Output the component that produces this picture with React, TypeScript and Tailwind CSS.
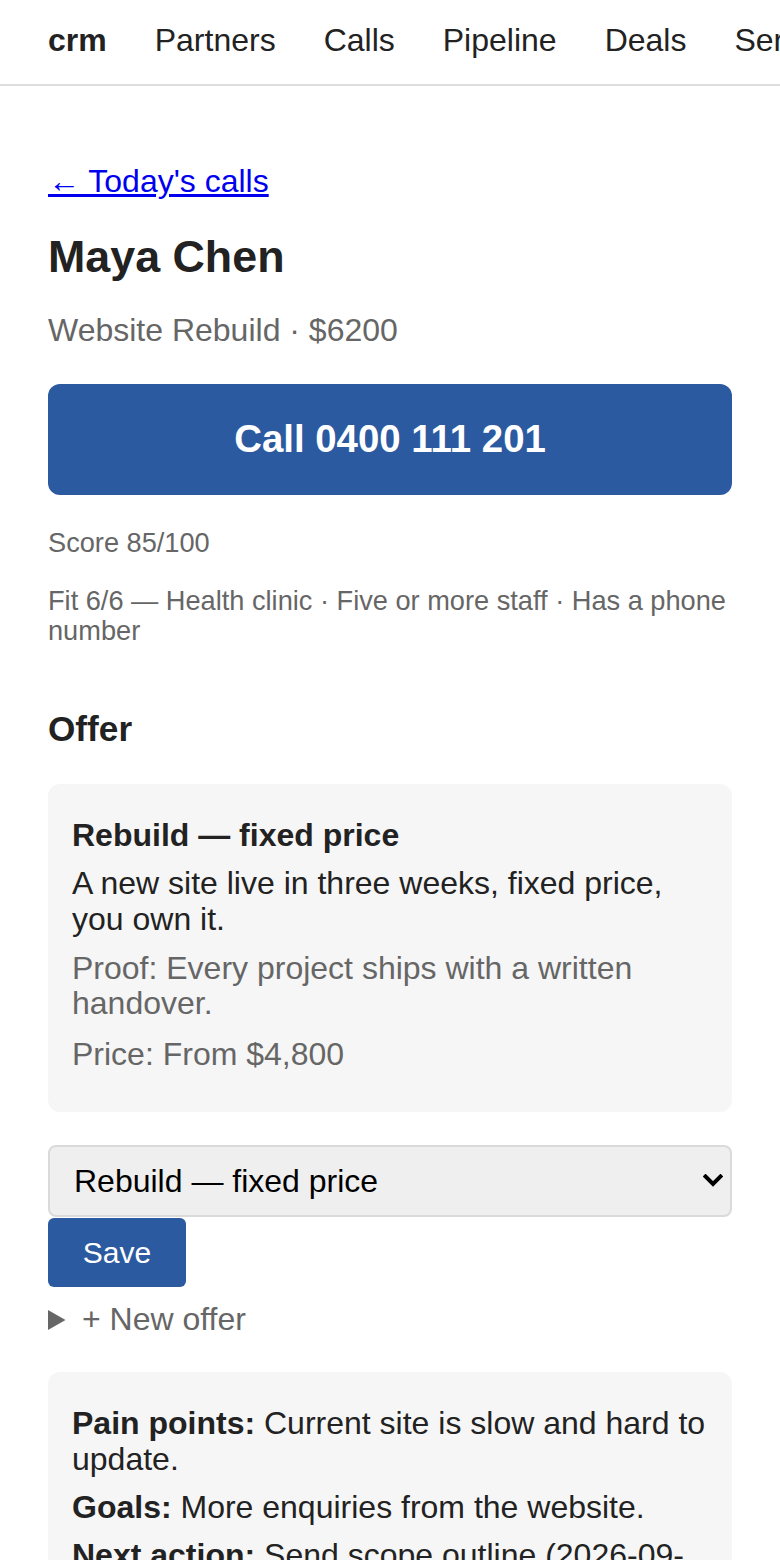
export default function App() {
  return (
    <div className="min-h-[1560px] bg-white font-['Liberation_Sans',Arial,sans-serif] leading-[1.1] text-[#222]">
      <nav className="flex h-[86px] items-start gap-[48px] overflow-hidden whitespace-nowrap border-b-2 border-[#dddddd] px-[48px] pt-[22px] text-[32px] leading-[37px] text-[#222]">
        <span className="font-bold">crm</span>
        <span>Partners</span>
        <span>Calls</span>
        <span>Pipeline</span>
        <span>Deals</span>
        <span>Services</span>
        <span>Settings</span>
      </nav>

      <main className="px-[48px] pt-[78px]">
        <div className="text-[32px] leading-[35.2px]">
          <a href="#" className="text-[#0000ee] underline">
            ← Today&apos;s calls
          </a>
        </div>

        <h1 className="mt-[33px] text-[44.8px] font-bold leading-[1.1] text-[#222]">Maya Chen</h1>

        <p className="mt-[32px] text-[32px] leading-[1.1] text-[#666]">Website Rebuild · $6200</p>

        <button className="mt-[35px] flex h-[111px] w-full items-center justify-center rounded-[12px] bg-[#2c5aa0] text-[38.4px] font-bold leading-[1.1] text-white">
          Call 0400 111 201
        </button>

        <p className="mt-[33px] text-[27.2px] leading-[1.1] text-[#666]">Score 85/100</p>
        <p className="mt-[28px] text-[27.2px] leading-[1.1] text-[#666]">
          Fit 6/6 — Health clinic · Five or more staff · Has a phone number
        </p>

        <h2 className="mt-[65px] text-[35.2px] font-bold leading-[1.1] text-[#222]">Offer</h2>

        <div className="mt-[35px] rounded-[12px] bg-[#f6f6f6] px-[24px] pb-[40px] pt-[34px] text-[32px] leading-[1.1]">
          <div className="font-bold text-[#222]">Rebuild — fixed price</div>
          <p className="mt-[13px] text-[#222]">A new site live in three weeks, fixed price, you own it.</p>
          <p className="mt-[14px] text-[#666]">Proof: Every project ships with a written handover.</p>
          <p className="mt-[16px] text-[#666]">Price: From $4,800</p>
        </div>

        <div className="relative mt-[33px]">
          <select
            defaultValue="rebuild"
            className="block h-[72px] w-full appearance-none rounded-[8px] border-2 border-[#dadada] bg-[#efefef] pl-[24px] pr-[60px] font-['Liberation_Sans',Arial,sans-serif] text-[32px] leading-[1.1] text-black outline-none"
          >
            <option value="rebuild">Rebuild — fixed price</option>
            <option value="retainer">Care plan — monthly</option>
          </select>
          <svg
            className="pointer-events-none absolute right-[9px] top-[29px]"
            width="20"
            height="14"
            viewBox="0 0 20 14"
            fill="none"
          >
            <path d="M2.5 2.5 L10 10 L17.5 2.5" stroke="#000" strokeWidth="4" strokeLinecap="square" />
          </svg>
        </div>

        <button className="mt-[1px] flex h-[69px] w-[138px] items-center justify-center rounded-[6px] bg-[#2c5aa0] text-[30px] leading-[1.1] text-white">
          Save
        </button>

        <div className="mt-[15px] flex items-center gap-[16px] text-[32px] leading-[1.1] text-[#666]">
          <svg width="18" height="20" viewBox="0 0 18 20" className="shrink-0">
            <path d="M0 0 L17.5 10 L0 20 Z" fill="#666" />
          </svg>
          <span>+ New offer</span>
        </div>

        <div className="mt-[35px] rounded-[12px] bg-[#f6f6f6] px-[24px] pb-[40px] pt-[34px] text-[32px] leading-[1.1] text-[#222]">
          <p>
            <span className="font-bold">Pain points:</span> Current site is slow and hard to update.
          </p>
          <p className="mt-[13px]">
            <span className="font-bold">Goals:</span> More enquiries from the website.
          </p>
          <p className="mt-[13px]">
            <span className="font-bold">Next action:</span> Send scope outline (2026-09-18)
          </p>
        </div>
      </main>
    </div>
  );
}
